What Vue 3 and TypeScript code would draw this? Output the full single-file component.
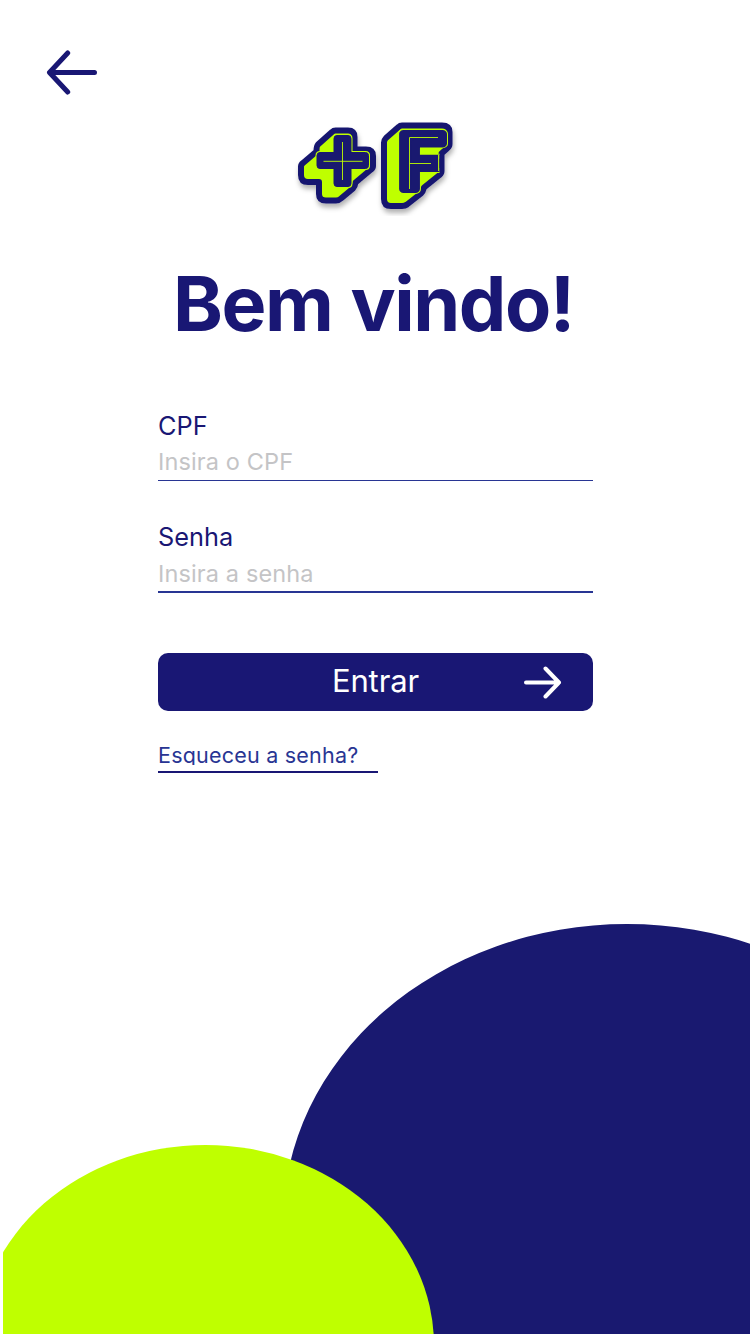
<script setup lang="ts">
import { ref } from 'vue'

interface Field {
  id: string
  label: string
  placeholder: string
  type: string
}

const fields: Field[] = [
  { id: 'cpf', label: 'CPF', placeholder: 'Insira o CPF', type: 'text' },
  { id: 'senha', label: 'Senha', placeholder: 'Insira a senha', type: 'password' },
]
const values = ref<Record<string, string>>({ cpf: '', senha: '' })
</script>

<template>
  <main class="screen">
    <svg class="backdrop" viewBox="0 0 750 420" aria-hidden="true">
      <defs>
        <clipPath id="edge"><rect x="3" y="0" width="747" height="420" /></clipPath>
      </defs>
      <path d="M286 420V309H283A344 299 0 0 1 971 309V420Z" fill="#191970" />
      <ellipse cx="205.500" cy="431" rx="228.500" ry="200" fill="#bfff00" clip-path="url(#edge)" />
    </svg>

    <header class="top">
      <button class="back" type="button" aria-label="Voltar">
        <svg viewBox="0 0 52 46" width="52" height="46">
          <path d="M21.700 3L3.500 22.500L21.700 42M4 22.500H48.500" />
        </svg>
      </button>
    </header>

    <svg class="logo" viewBox="290 115 170 105" width="170" height="105" role="img" aria-label="+F">
      <defs>
        <filter id="shade" x="-20%" y="-20%" width="140%" height="150%">
          <feDropShadow dx="1" dy="4" stdDeviation="2.500" flood-color="#000" flood-opacity="0.3" />
        </filter>
        <clipPath id="crop"><rect x="290" y="115" width="170" height="101" /></clipPath>
        <clipPath id="bars"><path d="M395 120H455V150H439.500V200H395Z" /></clipPath>
      </defs>
      <g clip-path="url(#crop)">
        <g filter="url(#shade)">
          <path class="body" d="M335.500 130.500H348Q354.500 130.500 354.500 137V149.500H366Q373 149.500 373 156V166Q373 168 371 169.500L355.500 182.500Q355 186.500 353 188.500L341 198.500Q339 200.500 336 200.500H326Q319 200.500 319 194V182H308Q301 182 301 175V166.500Q301 164.500 303 163L316.500 151.500Q316.500 146 318 144.500L332 132Q333.500 130.500 335.500 130.500Z" />
          <path class="body" d="M402 125.500H442Q449.500 125.500 449.500 132V144Q449.500 146.500 447.500 148L441.500 153.500V171Q441.500 173.500 439.500 175L424 187.500Q423 191.500 421 193.500L407 204.500Q405 206 402 206H391Q384 206 384 199V142.500Q384 140 386 138L398.500 127Q400 125.500 402 125.500Z" />
        </g>
        <path class="face face-rim" d="M337 135.500H348Q351 135.500 351 138.500V152.500H365.500Q368.500 152.500 368.500 155.500V165.500Q368.500 168.500 365.500 168.500H351V183.500Q351 186.500 348 186.500H337Q334 186.500 334 183.500V168.500H320Q317 168.500 317 165.500V155.500Q317 152.500 320 152.500H334V138.500Q334 135.500 337 135.500Z" />
        <path class="face" d="M337 135.500H348Q351 135.500 351 138.500V152.500H365.500Q368.500 152.500 368.500 155.500V165.500Q368.500 168.500 365.500 168.500H351V183.500Q351 186.500 348 186.500H337Q334 186.500 334 183.500V168.500H320Q317 168.500 317 165.500V155.500Q317 152.500 320 152.500H334V138.500Q334 135.500 337 135.500Z" />
        <path class="line" d="M342.500 142V180M323.500 161.300H362.500" />
        <g clip-path="url(#bars)">
          <g transform="translate(398 189) scale(1.080 1)">
            <text class="letter rim">F</text>
            <text class="letter">F</text>
          </g>
        </g>
        <path class="line" d="M438.500 155V171" />
        <path class="line" d="M438 137.500H409.500V189M409.500 163.500H431" />
      </g>
    </svg>

    <h1 class="title">Bem vindo!</h1>

    <form class="form" @submit.prevent>
      <div v-for="f in fields" :key="f.id" class="field" :class="f.id">
        <label :for="f.id">{{ f.label }}</label>
        <input :id="f.id" v-model="values[f.id]" :type="f.type" :placeholder="f.placeholder" />
      </div>
      <button class="enter" type="submit">
        <span></span>
        <span class="enter-text">Entrar</span>
        <svg viewBox="0 0 40 34" width="40" height="34">
          <path d="M22.500 3.500L36 17.500L22.500 31.500M3 17.500H36" />
        </svg>
      </button>
      <a class="forgot"><span>Esqueceu a senha?</span></a>
    </form>
  </main>
</template>

<style>
body {
  background: #fff;
}
</style>

<style scoped>
.screen {
  position: relative;
  box-sizing: border-box;
  width: 750px;
  height: 1334px;
  overflow: hidden;
  display: flex;
  flex-direction: column;
  align-items: center;
  font-family: Inter, "Liberation Sans", sans-serif;
  color: #191774;
}
.backdrop {
  position: absolute;
  left: 0;
  bottom: 0;
  width: 750px;
  height: 420px;
}
.top {
  align-self: stretch;
  height: 115px;
  padding: 50px 0 0 46px;
  box-sizing: border-box;
}
.back {
  display: block;
  padding: 0;
  border: 0;
  background: none;
}
.back svg {
  display: block;
}
.back path,
.enter path {
  fill: none;
  stroke: #191774;
  stroke-width: 5;
  stroke-linecap: round;
  stroke-linejoin: round;
}
.logo {
  display: block;
}
.body {
  fill: #bfff00;
  stroke: #191970;
  stroke-width: 6;
  stroke-linejoin: round;
}
.face {
  fill: #191970;
  stroke: #191970;
  stroke-width: 1;
}
.face-rim {
  stroke: #bfff00;
  stroke-width: 3;
}
.line {
  fill: none;
  stroke: #bfff00;
  stroke-width: 0.9;
}
.letter {
  font: 700 76px Inter, sans-serif;
  fill: #191970;
  stroke: #191970;
  stroke-width: 8;
  stroke-linejoin: round;
}
.letter.rim {
  stroke: #bfff00;
  stroke-width: 9.800;
}
.title {
  margin: 36px 3px 0 0;
  height: 95px;
  line-height: 95px;
  font-size: 75.500px;
  font-weight: 700;
  letter-spacing: -1.450px;
  word-spacing: 1.500px;
  white-space: nowrap;
}
.form {
  width: 435px;
  margin: 59px 0 0 1px;
  display: flex;
  flex-direction: column;
}
.field {
  display: flex;
  flex-direction: column;
  height: 71px;
  margin-bottom: 41px;
  border-bottom: 1px solid #283593;
  box-sizing: border-box;
}
.field.senha {
  height: 72px;
  margin-top: -1px;
  margin-bottom: 60px;
  border-bottom-width: 2px;
}
.field label {
  height: 32px;
  line-height: 32px;
  font-size: 25.300px;
}
.field input {
  height: 38px;
  padding: 0;
  box-sizing: border-box;
  border: 0;
  outline: 0;
  background: none;
  font: 400 23.500px/36px Inter, sans-serif;
  letter-spacing: 0.130px;
  color: #191774;
}
.field.senha input {
  padding-top: 3px;
  height: 39px;
}
.field input::placeholder {
  color: #c4c4c6;
  opacity: 1;
}
.enter {
  height: 58px;
  padding: 0 30px 0 0;
  border: 0;
  border-radius: 10px;
  background: #191774;
  color: #fff;
  display: grid;
  grid-template-columns: 30px 1fr 0;
  align-items: center;
  font: 400 31px/54px Inter, sans-serif;
  letter-spacing: -0.100px;
}
.enter-text {
  padding-bottom: 2px;
}
.enter svg {
  justify-self: end;
}
.enter path {
  stroke: #fff;
  stroke-width: 4;
}
.forgot {
  width: 220px;
  height: 32px;
  margin-top: 30px;
  box-sizing: border-box;
  border-bottom: 2px solid #191774;
  font-size: 21.500px;
  letter-spacing: 0.220px;
  color: #283593;
}
.forgot span {
  display: block;
  height: 24px;
  line-height: 29px;
  overflow: hidden;
}
</style>
